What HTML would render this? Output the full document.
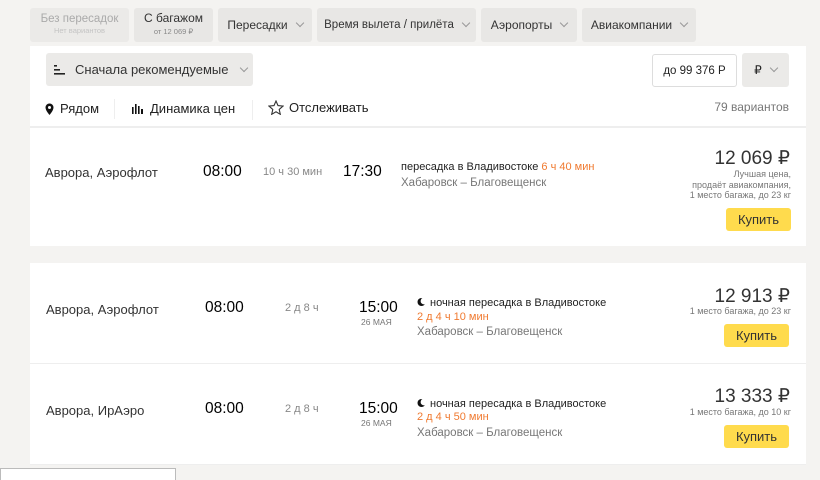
<!DOCTYPE html>
<html><head><meta charset="utf-8"><style>
*{margin:0;padding:0;box-sizing:border-box}
body{width:820px;height:478px;background:#f4f3f1;font-family:"Liberation Sans","Noto Sans CJK SC",sans-serif;position:relative;overflow:hidden;color:#222}
.a{position:absolute;white-space:nowrap}
.btn{position:absolute;top:8px;height:34px;background:#e8e7e5;border-radius:3px;font-size:12px;color:#333;display:flex;align-items:center;justify-content:center;white-space:nowrap}
.chev{display:inline-block;width:6px;height:6px;border-right:1.2px solid #999;border-bottom:1.2px solid #999;transform:rotate(45deg);margin-left:9px;margin-top:-4px}
.panel{position:absolute;left:30px;width:776px;background:#fff}
.air{font-size:13px;color:#333}
.t{font-size:15.5px;color:#000}
.dur{font-size:11px;color:#888}
.gray{color:#777}
.org{color:#f07a30}
.price{font-size:19px;color:#333;text-align:right;right:30px}
.note{font-size:9px;color:#777;text-align:right;right:29px;line-height:10.5px}
.buy{position:absolute;background:#ffdb4d;border-radius:3px;font-size:13px;color:#333;display:flex;align-items:center;justify-content:center;width:65px;height:23px}
.sep{position:absolute;left:30px;width:776px;height:2px;background:#eeeeee}
.moon{display:inline-block;vertical-align:-1px;margin-right:4px}
</style></head><body>
<div class="btn" style="left:30px;width:99px;flex-direction:column;color:#aaa;font-size:11.5px;line-height:12px;background:#ebeae8">Без пересадок<span style="font-size:7.5px;color:#c4c4c4">Нет вариантов</span></div>
<div class="btn" style="left:134px;width:79px;flex-direction:column;font-size:12px;line-height:13px">С багажом<span style="font-size:7.5px;color:#888">от 12 069 ₽</span></div>
<div class="btn" style="left:218px;width:94px">Пересадки<span class="chev"></span></div>
<div class="btn" style="left:317px;width:159px;font-size:11.5px">Время вылета / прилёта<span class="chev"></span></div>
<div class="btn" style="left:481px;width:96px">Аэропорты<span class="chev"></span></div>
<div class="btn" style="left:582px;width:114px">Авиакомпании<span class="chev"></span></div>

<div class="panel" style="top:46px;height:200px"></div>
<div class="a" style="left:46px;top:53px;width:207px;height:33px;background:#ebeae8;border-radius:3px;font-size:13px;display:flex;align-items:center;padding-left:8px;color:#333">
<svg width="12" height="10" style="margin-right:9px"><rect x="0" y="0" width="3" height="1.6" fill="#222"/><rect x="0" y="4" width="6" height="1.6" fill="#222"/><rect x="0" y="8" width="11" height="1.6" fill="#222"/></svg>Сначала рекомендуемые<span class="chev" style="margin-left:12px"></span></div>
<div class="a" style="left:652px;top:54px;width:85px;height:33px;border:1px solid #ddd;border-radius:3px;font-size:11.5px;display:flex;align-items:center;justify-content:center">до 99 376 Р</div>
<div class="a" style="left:742px;top:53px;width:47px;height:34px;background:#ebeae8;border-radius:3px;font-size:12px;display:flex;align-items:center;justify-content:center">₽<span class="chev"></span></div>

<div class="a" style="left:45px;top:101px;font-size:13px;display:flex;align-items:center">
<svg width="9" height="12" style="margin-right:6px"><path d="M4.5 0.5a4 4 0 0 1 4 4c0 3-4 7.5-4 7.5s-4-4.5-4-7.5a4 4 0 0 1 4-4z" fill="#111"/><circle cx="4.5" cy="4.5" r="1.5" fill="#fff"/></svg>Рядом</div>
<div class="a" style="left:114px;top:99px;width:1px;height:20px;background:#eee"></div>
<div class="a" style="left:132px;top:101px;font-size:13px;display:flex;align-items:center">
<svg width="12" height="10" style="margin-right:6px"><rect x="0" y="3" width="1.6" height="7" fill="#111"/><rect x="3" y="0" width="1.6" height="10" fill="#111"/><rect x="6" y="2" width="1.6" height="8" fill="#111"/><rect x="9" y="5" width="2" height="5" fill="#111"/></svg>Динамика цен</div>
<div class="a" style="left:252px;top:100px;width:1px;height:20px;background:#eee"></div>
<div class="a" style="left:268px;top:100px;font-size:13px;display:flex;align-items:center">
<svg width="16" height="15" style="margin-right:5px"><path d="M8 1l2 4.6 5 .5-3.8 3.3 1.1 4.9L8 11.8 3.7 14.3l1.1-4.9L1 6.1l5-.5z" fill="none" stroke="#333" stroke-width="1.1"/></svg>Отслеживать</div>
<div class="a" style="right:31px;top:100px;font-size:12px;color:#777">79 вариантов</div>
<div class="sep" style="top:126px"></div>

<div class="a air" style="left:45px;top:165px">Аврора, Аэрофлот</div>
<div class="a t" style="left:203px;top:163px">08:00</div>
<div class="a dur" style="left:263px;top:166px">10 ч 30 мин</div>
<div class="a t" style="left:343px;top:163px">17:30</div>
<div class="a" style="left:401px;top:161px;font-size:11px">пересадка в Владивостоке <span class="org">6 ч 40 мин</span></div>
<div class="a gray" style="left:401px;top:177px;font-size:11.5px">Хабаровск – Благовещенск</div>
<div class="a price" style="top:147px">12 069 ₽</div>
<div class="a note" style="top:169px">Лучшая цена,<br>продаёт авиакомпания,<br>1 место багажа, до 23 кг</div>
<div class="buy" style="left:726px;top:208px">Купить</div>

<div class="panel" style="top:263px;height:202px"></div>
<div class="a air" style="left:46px;top:302px">Аврора, Аэрофлот</div>
<div class="a t" style="left:205px;top:299px">08:00</div>
<div class="a dur" style="left:285px;top:302px">2 д 8 ч</div>
<div class="a t" style="left:359px;top:299px">15:00</div>
<div class="a" style="left:361px;top:317px;font-size:8.5px;color:#777">26 МАЯ</div>
<div class="a" style="left:417px;top:297px;font-size:11px"><svg class="moon" width="9" height="10"><circle cx="4.5" cy="5" r="4" fill="#111"/><circle cx="7" cy="4" r="3.4" fill="#fff"/></svg>ночная пересадка в Владивостоке</div>
<div class="a org" style="left:417px;top:311px;font-size:11px">2 д 4 ч 10 мин</div>
<div class="a gray" style="left:417px;top:326px;font-size:11.5px">Хабаровск – Благовещенск</div>
<div class="a price" style="top:285px">12 913 ₽</div>
<div class="a note" style="top:306px">1 место багажа, до 23 кг</div>
<div class="buy" style="left:724px;top:324px">Купить</div>
<div class="sep" style="top:363px;height:1px"></div>

<div class="a air" style="left:46px;top:403px">Аврора, ИрАэро</div>
<div class="a t" style="left:205px;top:400px">08:00</div>
<div class="a dur" style="left:285px;top:403px">2 д 8 ч</div>
<div class="a t" style="left:359px;top:400px">15:00</div>
<div class="a" style="left:361px;top:418px;font-size:8.5px;color:#777">26 МАЯ</div>
<div class="a" style="left:417px;top:398px;font-size:11px"><svg class="moon" width="9" height="10"><circle cx="4.5" cy="5" r="4" fill="#111"/><circle cx="7" cy="4" r="3.4" fill="#fff"/></svg>ночная пересадка в Владивостоке</div>
<div class="a org" style="left:417px;top:411px;font-size:11px">2 д 4 ч 50 мин</div>
<div class="a gray" style="left:417px;top:427px;font-size:11.5px">Хабаровск – Благовещенск</div>
<div class="a price" style="top:385px">13 333 ₽</div>
<div class="a note" style="top:407px">1 место багажа, до 10 кг</div>
<div class="buy" style="left:724px;top:425px">Купить</div>
<div class="sep" style="top:464px;height:1px"></div>

<div class="a" style="left:0;top:468px;width:176px;height:12px;background:#fff;border:1px solid #bbb;border-bottom:none"></div>
</body></html>
